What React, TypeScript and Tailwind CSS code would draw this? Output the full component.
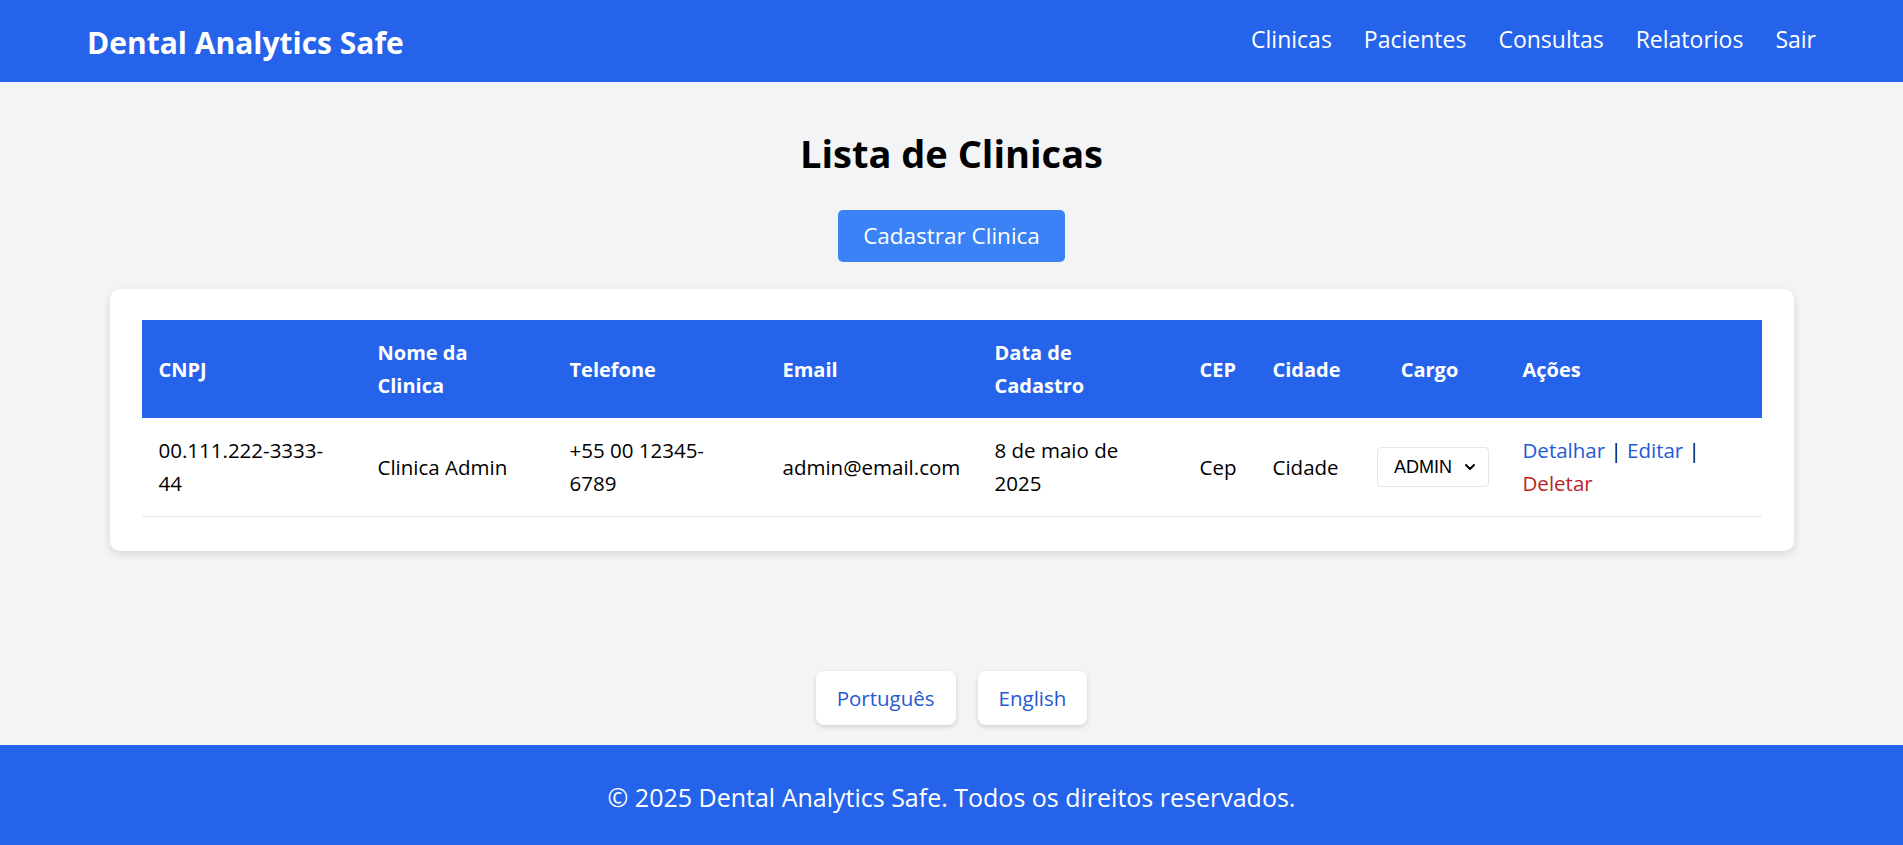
import { ChevronDown } from "lucide-react";

const navLinks = ["Clinicas", "Pacientes", "Consultas", "Relatorios", "Sair"];

const columns = [
  { label: "CNPJ", width: "w-[219px]" },
  { label: "Nome da Clinica", width: "w-[192px]" },
  { label: "Telefone", width: "w-[213px]" },
  { label: "Email", width: "w-[212px]" },
  { label: "Data de Cadastro", width: "w-[205px]" },
  { label: "CEP", width: "w-[73px]" },
  { label: "Cidade", width: "w-[105px]" },
  { label: "Cargo", width: "w-[145px]", center: true },
  { label: "Ações", width: "w-[256px]" },
];

function CargoSelect() {
  return (
    <div className="relative inline-block">
      <select
        defaultValue="ADMIN"
        className="h-[40px] w-[112px] appearance-none rounded-[4px] border border-[#e5e7eb] bg-white pl-[16px] pr-[30px] text-left text-[18px] text-black"
        style={{ fontFamily: "'Liberation Sans', Arial, sans-serif" }}
      >
        <option>ADMIN</option>
        <option>USER</option>
      </select>
      <ChevronDown
        className="pointer-events-none absolute right-[11px] top-1/2 h-[16px] w-[16px] -translate-y-1/2 text-black"
        strokeWidth={3}
      />
    </div>
  );
}

export default function App() {
  return (
    <div
      className="flex min-h-screen flex-col bg-[#f3f4f6] text-black"
      style={{ fontFamily: "'Open Sans', 'Noto Sans', sans-serif" }}
    >
      <header className="flex h-[82px] items-center justify-between bg-[#2563eb] px-[87px] text-white">
        <h1 className="pt-[2px] text-[30px] font-bold">Dental Analytics Safe</h1>
        <nav className="flex items-center gap-[32px] pb-[4px] text-[23px]">
          {navLinks.map((link) => (
            <a key={link} href="#" className="hover:underline">
              {link}
            </a>
          ))}
        </nav>
      </header>

      <main className="flex-1">
        <div className="mx-auto flex w-full max-w-[1684px] flex-col items-center">
          <h2 className="mt-[47px] text-[38px] font-bold leading-[48px]">Lista de Clinicas</h2>

          <button
            type="button"
            className="mt-[33px] h-[52px] w-[227px] rounded-[5px] bg-[#3b82f6] text-[22.5px] font-medium text-white hover:bg-[#2563eb]"
          >
            Cadastrar Clinica
          </button>

          <section className="mt-[27px] w-full rounded-[10px] bg-white px-[32px] pb-[34px] pt-[31px] shadow-[0_3px_8px_rgba(0,0,0,0.12)]">
            <table className="w-full table-fixed border-collapse text-left">
              <thead>
                <tr className="bg-[#2563eb] text-white">
                  {columns.map((col) => (
                    <th
                      key={col.label}
                      className={`${col.width} py-[16px] pl-[17px] pr-6 text-[20px] font-bold leading-[33px] ${
                        col.center ? "text-center" : ""
                      }`}
                    >
                      {col.label}
                    </th>
                  ))}
                </tr>
              </thead>
              <tbody>
                <tr className="border-b border-[#e5e7eb] text-[20.5px] leading-[33px]">
                  <td className="py-[16px] pl-[17px] pr-6">00.111.222-3333-44</td>
                  <td className="py-[16px] pl-[17px] pr-6">Clinica Admin</td>
                  <td className="py-[16px] pl-[17px] pr-6">+55 00 12345-6789</td>
                  <td className="whitespace-nowrap py-[16px] pl-[17px] pr-6">admin@email.com</td>
                  <td className="py-[16px] pl-[17px] pr-6">8 de maio de 2025</td>
                  <td className="py-[16px] pl-[17px] pr-0">Cep</td>
                  <td className="py-[16px] pl-[17px] pr-0">Cidade</td>
                  <td className="py-[16px] text-center">
                    <CargoSelect />
                  </td>
                  <td className="py-[16px] pl-[17px] pr-6">
                    <a href="#" className="text-[#2459d4] hover:underline">
                      Detalhar
                    </a>{" "}
                    |{" "}
                    <a href="#" className="text-[#2459d4] hover:underline">
                      Editar
                    </a>{" "}
                    |{" "}
                    <a href="#" className="text-[#b9232a] hover:underline">
                      Deletar
                    </a>
                  </td>
                </tr>
              </tbody>
            </table>
          </section>
        </div>
      </main>

      <div className="flex justify-center gap-[22px] pb-[20px]">
        <button
          type="button"
          className="h-[54px] rounded-[8px] bg-white px-[21px] text-[20.5px] text-[#2459d4] shadow-[0_2px_5px_rgba(0,0,0,0.15)]"
        >
          Português
        </button>
        <button
          type="button"
          className="h-[54px] rounded-[8px] bg-white px-[21px] text-[20.5px] text-[#2459d4] shadow-[0_2px_5px_rgba(0,0,0,0.15)]"
        >
          English
        </button>
      </div>

      <footer className="flex h-[100px] items-center justify-center bg-[#2563eb] pt-[6px] text-[25px] text-white">
        © 2025 Dental Analytics Safe. Todos os direitos reservados.
      </footer>
    </div>
  );
}
